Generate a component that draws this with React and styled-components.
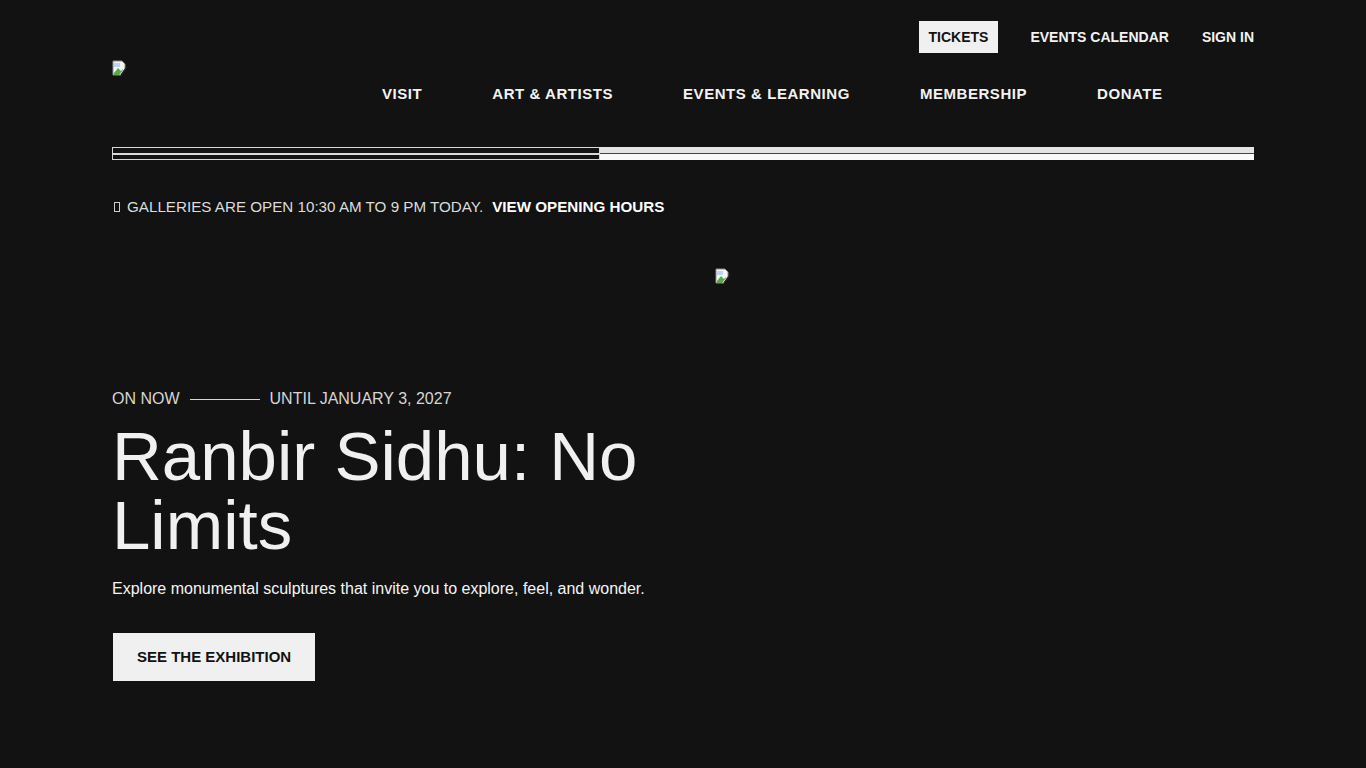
import styled, { createGlobalStyle } from "styled-components";

const GlobalStyle = createGlobalStyle`
  html, body { margin: 0; padding: 0; background: #121212; }
  body { font-family: "Liberation Sans", Arial, sans-serif; color: #eee; }
  * { box-sizing: border-box; }
`;

const Page = styled.div`
  width: 1142px;
  margin: 0 auto;
  padding-top: 21px;
  min-height: 768px;
`;

const UtilityNav = styled.nav`
  display: flex;
  justify-content: flex-end;
  align-items: center;
  gap: 33px;
  height: 32px;
`;

const UtilityLink = styled.a`
  font-size: 14px;
  font-weight: 700;
  color: ${(p) => (p.$filled ? "#121212" : "#f2f2f2")};
  background: ${(p) => (p.$filled ? "#f0f0f0" : "transparent")};
  padding: ${(p) => (p.$filled ? "0 10px" : "0")};
  margin-right: ${(p) => (p.$filled ? "-1px" : "0")};
  height: 32px;
  line-height: 32px;
  text-decoration: none;
`;

const MainRow = styled.div`
  display: flex;
  align-items: flex-start;
  margin-top: 7px;
`;

const LogoBox = styled.div`
  width: 270px;
  height: 16px;
`;

const MainNav = styled.ul`
  display: flex;
  gap: 70px;
  list-style: none;
  margin: 25px 0 0;
  padding: 0;
`;

const NavItem = styled.li`
  font-size: 15px;
  font-weight: 700;
  letter-spacing: 0.55px;
  line-height: 18px;
  color: #f2f2f2;
`;

const Track = styled.div`
  display: flex;
  margin-top: 44px;
  height: 13px;
`;

const TrackPart = styled.div`
  display: flex;
  flex-direction: column;
  width: ${(p) => (p.$grow ? "auto" : "488px")};
  flex: ${(p) => (p.$grow ? 1 : "none")};
`;

const Lane = styled.div`
  flex: 1;
  background: ${(p) => (p.$fill ? p.$fill : "#121212")};
  border: ${(p) => (p.$fill ? "none" : "1px solid #d8d8d8")};
  border-top: ${(p) => (p.$line ? "1px solid #444" : undefined)};
`;

const Notice = styled.p`
  margin: 37px 0 0;
  font-size: 15.2px;
  color: #dcdcdc;
  display: flex;
  align-items: center;
  line-height: 20px;
`;

const TofuIcon = styled.span`
  display: inline-block;
  width: 6px;
  height: 10px;
  border: 1px solid #ccc;
  margin: 0 7px 0 2px;
`;

const NoticeLink = styled.a`
  font-weight: 700;
  color: #fff;
  margin-left: 9px;
  text-decoration: none;
`;

const Hero = styled.section`
  display: grid;
  grid-template-columns: 539px 539px;
  gap: 64px;
  margin-top: 51px;
`;

const HeroText = styled.div`
  padding-top: 122px;
`;

const Meta = styled.div`
  display: flex;
  align-items: center;
  gap: 10px;
  font-size: 16px;
  color: #d6d6d6;
  line-height: 18px;
`;

const Rule = styled.span`
  width: 70px;
  height: 1px;
  background: #d6d6d6;
`;

const Title = styled.h1`
  margin: 14px 0 0;
  font-size: 69px;
  font-weight: 400;
  line-height: 69px;
  color: #f0f0f0;
`;

const Lede = styled.p`
  margin: 19px 0 0;
  font-size: 16px;
  line-height: 20px;
  color: #f5f5f5;
`;

const Button = styled.a`
  display: inline-block;
  margin-top: 34px;
  margin-left: 1px;
  height: 48px;
  line-height: 48px;
  padding: 0 24px;
  background: #f0f0f0;
  color: #121212;
  font-size: 15px;
  font-weight: 700;
  text-decoration: none;
`;

const BrokenImage = () => (
  <svg width="16" height="16" viewBox="0 0 16 16">
    <path d="M1 1h9l3 3v5l-4 6H1z" fill="#f4f4f4" stroke="#8a8a8a" strokeWidth="1" />
    <path d="M2 13l4-5 3 3 2-2v1l-4 5H2z" fill="#5aa845" />
    <path d="M2 3h6v4H2z" fill="#b8d4f0" />
    <path d="M9 15l6-8" stroke="#222" strokeWidth="1.4" />
  </svg>
);

export default function App() {
  return (
    <>
      <GlobalStyle />
      <Page>
        <UtilityNav>
          <UtilityLink $filled>TICKETS</UtilityLink>
          <UtilityLink>EVENTS CALENDAR</UtilityLink>
          <UtilityLink>SIGN IN</UtilityLink>
        </UtilityNav>
        <MainRow>
          <LogoBox>
            <BrokenImage />
          </LogoBox>
          <MainNav>
            <NavItem>VISIT</NavItem>
            <NavItem>ART &amp; ARTISTS</NavItem>
            <NavItem>EVENTS &amp; LEARNING</NavItem>
            <NavItem>MEMBERSHIP</NavItem>
            <NavItem>DONATE</NavItem>
          </MainNav>
        </MainRow>
        <Track>
          <TrackPart>
            <Lane />
            <Lane />
          </TrackPart>
          <TrackPart $grow>
            <Lane $fill="#e4e4e4" />
            <Lane $fill="#fafafa" $line />
          </TrackPart>
        </Track>
        <Notice>
          <TofuIcon />
          GALLERIES ARE OPEN 10:30 AM TO 9 PM TODAY.
          <NoticeLink>VIEW OPENING HOURS</NoticeLink>
        </Notice>
        <Hero>
          <HeroText>
            <Meta>
              ON NOW <Rule /> UNTIL JANUARY 3, 2027
            </Meta>
            <Title>Ranbir Sidhu: No Limits</Title>
            <Lede>Explore monumental sculptures that invite you to explore, feel, and wonder.</Lede>
            <Button>SEE THE EXHIBITION</Button>
          </HeroText>
          <div>
            <BrokenImage />
          </div>
        </Hero>
      </Page>
    </>
  );
}
